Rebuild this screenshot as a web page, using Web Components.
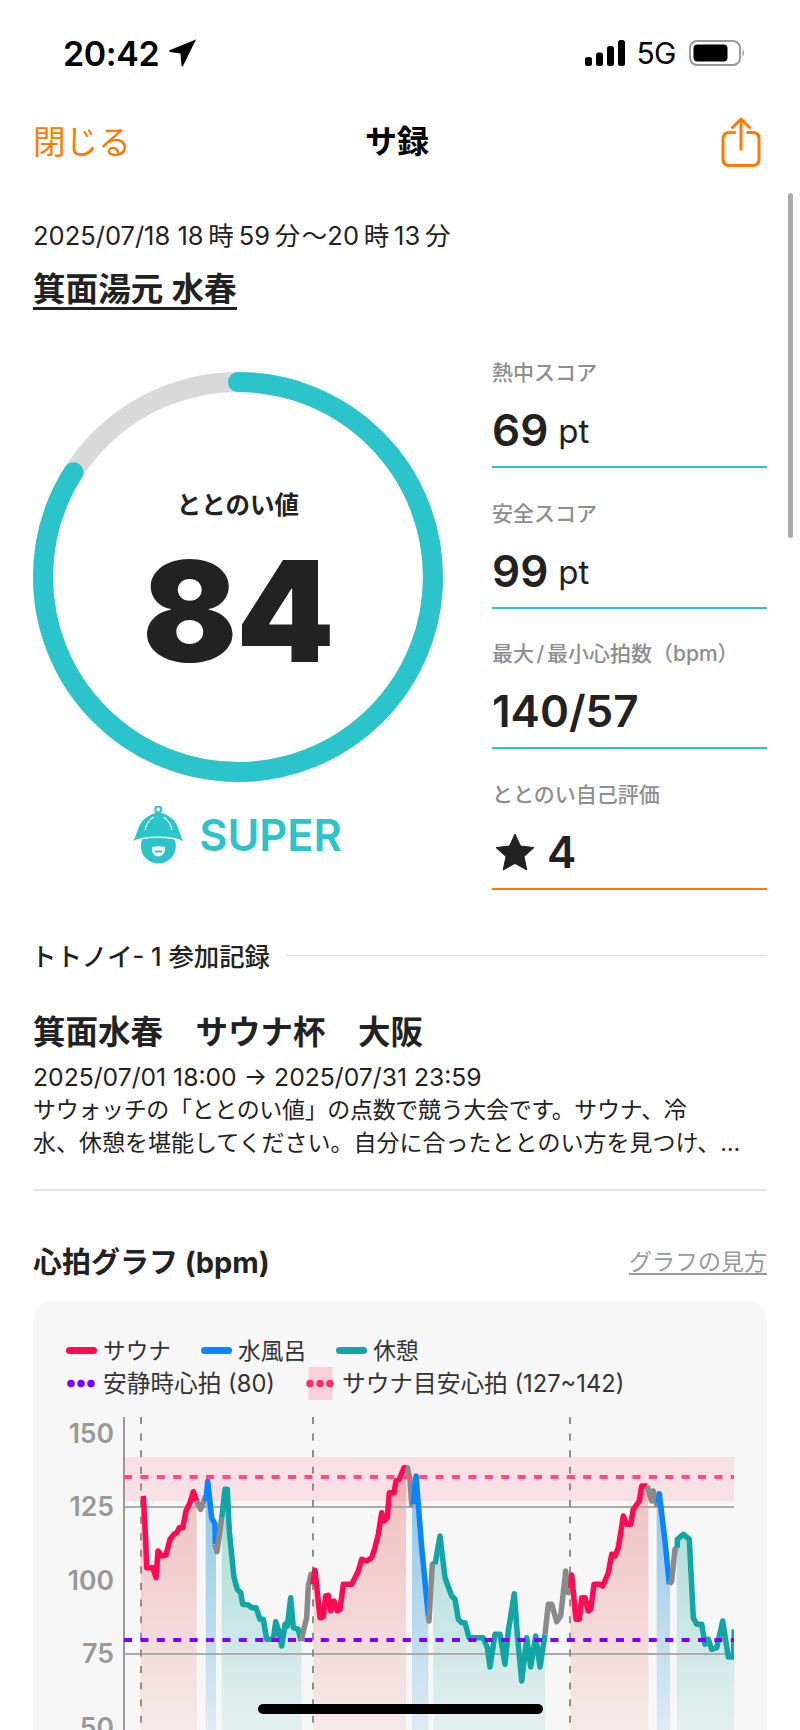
<!DOCTYPE html>
<html lang="ja">
<head>
<meta charset="utf-8">
<title>サ録</title>
<style>
  html, body { margin: 0; padding: 0; background: #fff; }
  body {
    position: relative;
    width: 800px;
    height: 1730px;
    overflow: hidden;
    font-family: Inter, "Noto Sans CJK JP", sans-serif;
    color: #222;
  }
</style>
</head>
<body>
<status-bar time="20:42"></status-bar>
<nav-bar>サ録</nav-bar>

<main-content>
  <visit-head date="2025/07/18 18時59分〜20時13分" place="箕面湯元 水春"></visit-head>

  <score-summary>
    <score-ring slot="ring" score="84" label="ととのい値" rank="SUPER"></score-ring>
    <stat-item slot="stats" label="熱中スコア"><b>69</b><small>pt</small></stat-item>
    <stat-item slot="stats" label="安全スコア"><b>99</b><small>pt</small></stat-item>
    <stat-item slot="stats" label="最大 / 最小心拍数（bpm）"><b>140/57</b></stat-item>
    <stat-item slot="stats" label="ととのい自己評価" accent="orange"><star-mark></star-mark><b>4</b></stat-item>
  </score-summary>

  <event-record heading="トトノイ- 1 参加記録" title="箕面水春　サウナ杯　大阪" period="2025/07/01 18:00 → 2025/07/31 23:59">
    <span>サウォッチの「ととのい値」の点数で競う大会です。サウナ、冷</span><br>水、休憩を堪能してください。自分に合ったととのい方を見つけ、…
  </event-record>

  <graph-card heading="心拍グラフ (bpm)" link="グラフの見方"></graph-card>
</main-content>

<scroll-thumb></scroll-thumb>
<home-indicator></home-indicator>

<script>
  (function (customElements) {
    'use strict';

    function define(name, html) {
      customElements.define(name, class extends HTMLElement {
        constructor() {
          super();
          const shadowRoot = this.attachShadow({ mode: 'open' });
          const attr = (key) => this.getAttribute(key) || '';
          shadowRoot.innerHTML = typeof html === 'function' ? html(attr) : html;
        }
      });
    }

    define('status-bar', (a) => `
      <style>
        :host { display: flex; height: 106px; align-items: center; padding: 0 54px 0 63px; box-sizing: border-box; color: #000; }
        .time { font-size: 34px; font-weight: 600; letter-spacing: -0.4px; margin-right: 10px; }
        .net { font-size: 30px; margin: 0 13px 0 11px; letter-spacing: -0.5px; }
        .spacer { flex: 1; }
        svg { display: block; }
      </style>
      <span class="time">${a('time')}</span>
      <svg width="28" height="28" viewBox="0 0 28 28"><path d="M27 0.5 L14 27 Q13 28 12.5 26.5 L11.5 14.5 L1 13 Q-0.5 12 1 11 Z" fill="#000"/></svg>
      <span class="spacer"></span>
      <svg width="40" height="26" viewBox="0 0 40 26" fill="#000">
        <rect x="0" y="17" width="7" height="9" rx="2.5"/>
        <rect x="11" y="12.5" width="7" height="13.5" rx="2.5"/>
        <rect x="22" y="6" width="7" height="20" rx="2.5"/>
        <rect x="33" y="0" width="7" height="26" rx="2.5"/>
      </svg>
      <span class="net">5G</span>
      <svg width="57" height="26" viewBox="0 0 57 26">
        <rect x="1" y="1" width="50" height="24" rx="7" fill="none" stroke="#999" stroke-width="2"/>
        <rect x="4.5" y="4.5" width="34" height="17" rx="4" fill="#000"/>
        <path d="M53.5 9 Q56.5 13 53.5 17 Z" fill="#999"/>
      </svg>
    `);

    define('nav-bar', `
      <style>
        :host { display: grid; grid-template-columns: 1fr auto 1fr; align-items: center; height: 72px; padding: 0 39px 0 33px; color: #000; }
        .close { font-size: 32.6px; color: #ff7a00; margin-top: -6px; }
        .title { font-size: 32px; font-weight: 700; margin-top: -6px; }
        svg { justify-self: end; display: block; }
      </style>
      <span class="close">閉じる</span>
      <span class="title"><slot></slot></span>
      <svg width="40" height="50" viewBox="0 0 40 50" fill="none" stroke="#ff7a00" stroke-width="3" stroke-linecap="round" stroke-linejoin="round">
        <path d="M13.5 15.5 H8.5 Q2 15.5 2 22 V42 Q2 48.5 8.5 48.5 H31.5 Q38 48.5 38 42 V22 Q38 15.5 31.5 15.5 H26.5"/>
        <path d="M20 32 V2.5 M11.5 10.5 L20 2 L28.5 10.5"/>
      </svg>
    `);

    define('main-content', `
      <style>:host { display: block; padding: 0 33px; }</style>
      <slot></slot>
    `);

    define('visit-head', (a) => `
      <style>
        :host { display: block; padding-top: 41px; }
        .date { font-size: 25.5px; line-height: 34px; text-autospace: normal; white-space: nowrap; }
        .date i { font-style: normal; margin: 0 1.6px; }
        .place { display: inline-block; margin-top: 19px; font-size: 32.6px; line-height: 35px; font-weight: 600; border-bottom: 3px solid #222; }
      </style>
      <div class="date">${a('date').replace(/[時分]/g, '<i>$&</i>')}</div>
      <span class="place">${a('place')}</span>
    `);

    define('score-summary', `
      <style>
        :host { display: flex; margin-top: 16px; }
        .ring { width: 410px; margin-top: 46px; flex: none; }
        .stats { margin-left: 49px; width: 275px; display: flex; flex-direction: column; gap: 31.67px; padding-top: 33px; }
      </style>
      <div class="ring"><slot name="ring"></slot></div>
      <div class="stats"><slot name="stats"></slot></div>
    `);

    define('score-ring', (a) => {
      const r = 195;
      const len = 2 * Math.PI * r;
      const on = len * parseInt(a('score'), 10) / 100;
      return `
      <style>
        :host { display: block; color: #222; }
        .dial { display: grid; width: 410px; height: 410px; }
        .dial > * { grid-area: 1 / 1; }
        .center { display: flex; flex-direction: column; align-items: center; }
        .label { margin-top: 116px; font-size: 24.5px; line-height: 34px; font-weight: 600; }
        .score { margin-top: 4px; font-size: 140px; line-height: 170px; font-weight: 900; letter-spacing: -1px; }
        .rank { display: flex; align-items: center; justify-content: center; gap: 15px; margin-top: 23px; margin-left: -2px; color: #2cc4cb; font-size: 43.3px; line-height: 60px; font-weight: 600; }
        svg { display: block; }
      </style>
      <div class="dial">
        <svg width="410" height="410" viewBox="0 0 410 410" fill="none" stroke-width="20">
          <circle cx="205" cy="205" r="${r}" stroke="#d9d9d9"/>
          <circle cx="205" cy="205" r="${r}" stroke="#2cc4cb" stroke-linecap="round" stroke-dasharray="${on} ${len}" transform="rotate(-90 205 205)"/>
        </svg>
        <div class="center">
          <div class="label">${a('label')}</div>
          <div class="score">${a('score')}</div>
        </div>
      </div>
      <div class="rank">
        <svg width="52" height="58" viewBox="7 7 52 58">
          <circle cx="33.3" cy="10.5" r="3" fill="none" stroke="#2cc4cb" stroke-width="2"/>
          <path d="M8 42.5 C12 36 13 25 20 19.5 C25 15.5 29 14 33.3 13.5 C38 14 42 15.5 47 19.5 C53.5 25 54.5 36 58.5 42.5 C48 36 19 36 8 42.5 Z" fill="#2cc4cb"/>
          <circle cx="33.3" cy="47" r="17.5" fill="#2cc4cb"/>
          <path d="M7 43.5 C18 36.5 48 36.5 59.5 43.5" fill="none" stroke="#fff" stroke-width="1.6"/>
          <path d="M20 31 C21 26 24 21 28.5 18 M47 31 C46 26 43 21 38.5 18" fill="none" stroke="#fff" stroke-width="1.2"/>
          <path d="M27 48 C31 47 36 47 40 48 C40.5 54 37.5 57.5 33.5 57.5 C29.5 57.5 26.5 54 27 48 Z" fill="#fff"/>
          <path d="M30.5 52.5 H36.5" stroke="#2cc4cb" stroke-width="1.8" stroke-linecap="round"/>
        </svg>
        <span>${a('rank')}</span>
      </div>`;
    });

    define('stat-item', (a) => `
      <style>
        :host { display: block; border-bottom: 2px solid ${a('accent') === 'orange' ? '#ff7a00' : '#2cc4cb'}; height: 107px; box-sizing: content-box; }
        .label { font-size: 21px; line-height: 28px; font-weight: 500; color: #8e8e8e; white-space: nowrap; word-spacing: -3px; }
        .value { display: flex; align-items: center; gap: 10px; height: 50px; margin-top: 18px; }
        ::slotted(b) { font-size: 44px; line-height: 50px; font-weight: 600; color: #222; }
        ::slotted(small) { font-size: 33px; line-height: 50px; font-weight: 400; color: #222; padding-top: 2px; }
      </style>
      <div class="label">${a('label')}</div>
      <div class="value"><slot></slot></div>
    `);

    define('star-mark', `
      <style>:host { display: block; margin-left: 3px; margin-right: 2px; } svg { display: block; }</style>
      <svg width="40" height="38" viewBox="0 0 40 38"><path d="M20 1 L25.5 13 L39 14.6 L29 23.6 L31.8 37 L20 30.4 L8.2 37 L11 23.6 L1 14.6 L14.5 13 Z" fill="#222" stroke="#222" stroke-linejoin="round"/></svg>
    `);

    define('event-record', (a) => `
      <style>
        :host { display: block; margin-top: 49px; border-bottom: 2px solid #e3e3e3; padding-bottom: 28px; }
        .head { display: flex; align-items: center; gap: 16px; height: 34px; font-size: 25.4px; font-weight: 500; white-space: nowrap; margin-left: -2px; }
        .head span { margin-top: -2px; }
        .head i { flex: 1; height: 1px; background: #dcdcdc; }
        .title { margin-top: 38px; font-size: 32.5px; line-height: 44px; font-weight: 700; }
        .period { margin-top: 5px; font-size: 24.7px; line-height: 34px; }
        .text { font-size: 23px; line-height: 33.5px; white-space: nowrap; }
        ::slotted(span) { letter-spacing: -0.34px; }
      </style>
      <div class="head"><span>${a('heading')}</span><i></i></div>
      <div class="title">${a('title')}</div>
      <div class="period">${a('period')}</div>
      <div class="text"><slot></slot></div>
    `);

    define('legend-item', (a) => {
      const kind = a('kind');
      const color = a('color');
      const mark = kind === 'dots'
        ? `<svg width="31" height="33" viewBox="0 0 31 33">
             ${a('band') ? '<rect x="3.5" y="0" width="24" height="33" fill="#f8cfdb"/>' : ''}
             <circle cx="5" cy="16.5" r="3.8" fill="${color}"/><circle cx="15" cy="16.5" r="3.8" fill="${color}"/><circle cx="25" cy="16.5" r="3.8" fill="${color}"/>
           </svg>`
        : `<svg width="31" height="33" viewBox="0 0 31 33"><path d="M3.5 16.5 H27.5" stroke="${color}" stroke-width="7" stroke-linecap="round"/></svg>`;
      return `
        <style>
          :host { display: flex; align-items: center; gap: 6px; height: 33px; line-height: 33px; color: #333; white-space: nowrap; }
          svg { display: block; flex: none; }
        </style>
        ${mark}<span><slot></slot></span>`;
    });

    define('graph-card', (a) => `
      <style>
        :host { display: block; margin-top: 53px; }
        .head { display: flex; align-items: center; justify-content: space-between; height: 40px; padding-bottom: 8px; box-sizing: border-box; }
        h2 { margin: 0; font-size: 29px; font-weight: 700; }
        .link { font-size: 23px; color: #9a9a9a; text-decoration: underline; text-underline-offset: 3px; }
        .card { margin-top: 17px; background: #f7f7f7; border-radius: 20px; height: 500px; padding-top: 33px; box-sizing: border-box; }
        .row { display: flex; gap: 30px; padding-left: 33px; font-size: 22.7px; }
        .row.wide { font-size: 23.7px; }
        heart-chart { margin-top: 17px; }
      </style>
      <div class="head"><h2>${a('heading')}</h2><span class="link">${a('link')}</span></div>
      <div class="card">
        <div class="row">
          <legend-item kind="line" color="#ff0a54">サウナ</legend-item>
          <legend-item kind="line" color="#0a84ff">水風呂</legend-item>
          <legend-item kind="line" color="#12a5a5">休憩</legend-item>
        </div>
        <div class="row wide">
          <legend-item kind="dots" color="#8000ff">安静時心拍 (80)</legend-item>
          <legend-item kind="dots" band="1" color="#ff2d6d">サウナ目安心拍 (127~142)</legend-item>
        </div>
        <heart-chart></heart-chart>
      </div>
    `);

    // points were read off the 3x crops, L = left crop (30,1300) R = right crop (400,1300)
    const L = (p) => [30 + p[0] / 3, 1300 + p[1] / 3];
    const R = (p) => [400 + p[0] / 3, 1300 + p[1] / 3];
    const COLORS = { sauna: '#ff0a54', bath: '#0a84ff', rest: '#12a5a5', idle: '#8a8a8a' };

    const SEGMENTS = [
      ['sauna', L, [[340,585],[342,620],[347,720],[350,800],[368,800],[378,830],[384,750],[395,765],[408,762],[420,715],[432,700],[440,695],[448,680],[458,680],[468,630],[480,605],[490,572],[500,600]], 332, 500],
      ['idle', L, [[500,600],[512,625],[525,590],[528,600]]],
      ['bath', L, [[528,600],[533,540],[545,650],[555,670],[556,730]], 527, 558],
      ['idle', L, [[556,730],[561,752],[575,650]]],
      ['rest', L, [[575,650],[585,565],[592,565],[598,690],[612,830],[622,865],[632,875],[638,910],[655,912],[665,920],[678,920],[690,955],[700,955],[710,1015],[730,1015],[737,962],[745,985],[755,1035],[765,970],[772,975],[782,890],[790,980],[805,985],[813,1020]], 575, 815],
      ['idle', L, [[813,1020],[830,950],[835,855],[843,820],[848,850]]],
      ['sauna', L, [[848,850],[855,808],[870,950],[880,948],[887,885],[895,883],[902,930],[912,900],[922,930],[930,925],[940,850],[965,850],[975,830],[985,810],[995,775],[1010,780],[1025,770],[1035,740],[1045,700],[1055,635],[1062,660],[1072,650],[1078,575],[1092,575],[1098,540],[1108,535],[1122,500],[1130,500]], 850, 1128],
      ['idle', R, [[18,500],[22,500],[30,535],[35,610],[40,610]]],
      ['bath', R, [[40,610],[48,525],[55,610],[65,740],[85,945]], 36, 85],
      ['idle', R, [[85,945],[87,960],[97,790],[105,790]]],
      ['rest', R, [[105,790],[120,705],[135,830],[155,885],[165,895],[175,955],[185,965],[195,965],[207,1010],[250,1010],[262,1040],[270,1098],[285,1000],[300,1000],[315,1090],[325,990],[343,878],[352,1000],[365,1140],[380,1010],[392,1098],[407,1005],[420,1098],[435,1000]], 100, 435],
      ['idle', R, [[435,1000],[445,910],[455,910],[470,962],[482,945],[497,810],[505,875],[512,860]]],
      ['sauna', R, [[512,860],[515,822],[528,955],[538,955],[545,890],[555,890],[565,930],[572,925],[582,850],[600,850],[608,855],[625,815],[635,760],[645,765],[655,740],[670,645],[680,670],[692,670],[700,625],[718,600],[725,555],[742,555]], 511, 745],
      ['idle', R, [[742,555],[755,600],[760,570],[770,610],[775,605]]],
      ['bath', R, [[775,605],[778,578],[795,720],[808,850]], 770, 810],
      ['idle', R, [[808,850],[815,840],[825,745],[832,740]]],
      ['rest', R, [[832,740],[832,715],[850,700],[868,715],[880,950],[890,970],[905,970],[915,1030],[925,1015],[935,1045],[950,1040],[968,960],[985,1068],[1000,1068],[1003,985]], 830, 1003],
    ];

    function chartMarkup() {
      const pts = (list) => list.map((p) => p[0].toFixed(1) + ',' + p[1].toFixed(1)).join(' ');
      let fills = '';
      let lines = '';
      SEGMENTS.forEach(([kind, map, raw, from, to]) => {
        const mapped = raw.map(map);
        if (from !== undefined) {
          const x0 = map([from, 0])[0];
          const x1 = map([to, 0])[0];
          const clipped = mapped.filter((p) => p[0] >= x0 && p[0] <= x1);
          const area = [[x0, clipped[0][1]]].concat(clipped, [[x1, clipped[clipped.length - 1][1]], [x1, 1760], [x0, 1760]]);
          fills += `<polygon points="${pts(area)}" fill="url(#g-${kind})"/>`;
        }
        lines += `<polyline points="${pts(mapped)}" stroke="${COLORS[kind]}"/>`;
      });
      const labels = [[150, 1433], [125, 1506], [100, 1580], [75, 1653], [50, 1727]]
        .map(([v, y]) => `<text x="114" y="${y + 8.5}" text-anchor="end">${v}</text>`).join('');
      const marks = [141, 313, 570]
        .map((x) => `<path d="M${x} 1416 V1736" stroke="#8e8e8e" stroke-width="2" stroke-dasharray="7 9.6"/>`).join('');
      const stop = (c, a1, a2) => `<stop offset="0" stop-color="${c}" stop-opacity="${a1}"/><stop offset="1" stop-color="${c}" stop-opacity="${a2}"/>`;
      return `
        <svg width="734" height="320" viewBox="33 1416 734 320" font-family="Inter, sans-serif" font-size="26.5" font-weight="600" fill="#999">
          <defs>
            <linearGradient id="g-sauna" gradientUnits="userSpaceOnUse" x1="0" y1="1450" x2="0" y2="1760">${stop('#e04848', .34, .05)}</linearGradient>
            <linearGradient id="g-bath" gradientUnits="userSpaceOnUse" x1="0" y1="1450" x2="0" y2="1760">${stop('#3a9fd8', .62, .08)}</linearGradient>
            <linearGradient id="g-rest" gradientUnits="userSpaceOnUse" x1="0" y1="1450" x2="0" y2="1760">${stop('#14a898', .4, .05)}</linearGradient>
            <clipPath id="plot"><rect x="124" y="1416" width="610" height="320"/></clipPath>
          </defs>
          ${labels}
          <rect x="124" y="1456" width="610" height="44" fill="#f9dfe6"/>
          ${fills}
          <path d="M124 1506 H734 M124 1653 H734" stroke="#ababab" stroke-width="2"/>
          <path d="M124 1416 V1736" stroke="#999" stroke-width="2"/>
          ${marks}
          <g fill="none" stroke-width="5.5" stroke-linejoin="round" clip-path="url(#plot)">${lines}</g>
          <path d="M124 1476 H734" stroke="#ff4d80" stroke-width="4" stroke-dasharray="8 8.4"/>
          <path d="M124 1639 H734" stroke="#8000ff" stroke-width="4" stroke-dasharray="8 8.4"/>
        </svg>`;
    }

    define('heart-chart', `
      <style>:host { display: block; } svg { display: block; }</style>
      ${chartMarkup()}
    `);

    define('scroll-thumb', `
      <style>:host { position: absolute; left: 788px; top: 193px; width: 5px; height: 345px; border-radius: 3px; background: #ababab; }</style>
    `);

    define('home-indicator', `
      <style>:host { position: absolute; left: 258px; top: 1704px; width: 285px; height: 10px; border-radius: 5px; background: #000; }</style>
    `);
  })(window.customElements);
</script>
</body>
</html>
